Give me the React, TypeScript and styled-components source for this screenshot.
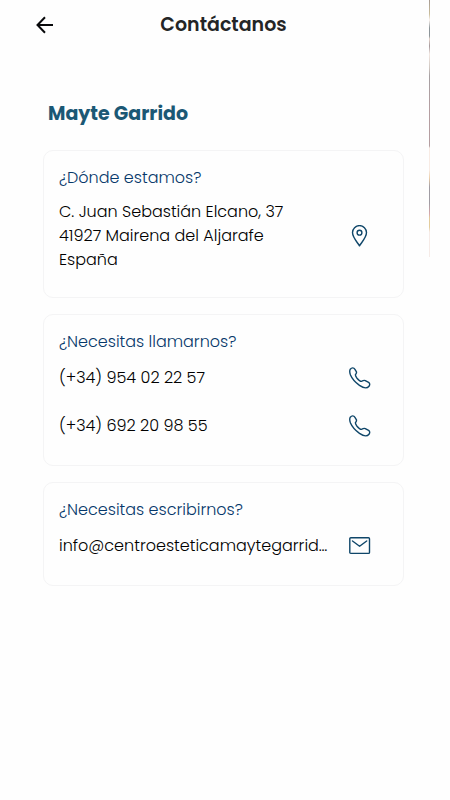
import React from "react";
import styled, { createGlobalStyle } from "styled-components";

const GlobalStyle = createGlobalStyle`
  * { box-sizing: border-box; }
  body { margin: 0; background: #fefefe; font-family: Poppins, Inter, "Open Sans", sans-serif; }
`;

const Screen = styled.div`
  position: relative;
  min-height: 100vh;
  margin: 0 20px 0 17px;
  color: #000000;

  &::after {
    content: "";
    position: absolute;
    top: 0;
    right: 0;
    width: 1px;
    height: 257px;
    background: linear-gradient(
      #a79a92 0, #c9bd9b 14px, #fbf3ee 20px, #8d9599 28px, #8d9599 36px, #e6d5cc 39px,
      #a5989b 46px, #f3e8e2 54px, #cfc6c0 68px, #a6a0a2 76px, #b59ea1 110px, #b59ea1 146px,
      #f8ebe4 148px, #f8ebe4 170px, #edcfaa 178px, #a09ca3 187px, #a09ca3 203px,
      #d8a8ab 214px, #e3cc9c 218px, #e3cc9c 227px, #f6ebe7 232px, #f6ebe7 257px
    );
  }
`;

const Header = styled.header`
  display: grid;
  grid-template-columns: 56px 1fr 56px;
  align-items: center;
  height: 50px;
`;

const BackButton = styled.button`
  display: flex;
  align-items: center;
  justify-content: center;
  height: 48px;
  padding: 0;
  border: 0;
  background: none;
  color: #08090b;
  cursor: pointer;
`;

const Title = styled.h1`
  margin: 0;
  font-size: 19px;
  line-height: 24px;
  font-weight: 600;
  text-align: center;
  color: #242526;
`;

const Main = styled.main`
  display: flex;
  flex-direction: column;
  gap: 16px;
  padding: 50px 26px 0;
`;

const BusinessName = styled.h2`
  margin: 0 0 6px;
  padding-left: 5px;
  font-size: 19px;
  line-height: 28px;
  font-weight: 700;
  color: #1b5875;
`;

const Card = styled.section`
  padding: 15px;
  border: 1px solid #f4f4f5;
  border-radius: 10px;
`;

const CardHeading = styled.h3`
  margin: 0;
  font-size: 16px;
  line-height: 24px;
  font-weight: 300;
  color: #06386a;
`;

const ContactRow = styled.a`
  display: flex;
  align-items: center;
  gap: 16px;
  min-height: 48px;
  padding: 10px 17px 10px 0;
  color: inherit;
  text-decoration: none;
`;

const ContactText = styled.span`
  flex: 1;
  min-width: 0;
  overflow: hidden;
  text-overflow: ellipsis;
  white-space: pre;
  font-size: 16px;
  line-height: 24px;
  font-weight: 300;
`;

const Icon = styled.svg`
  flex: none;
  display: block;
  width: 22px;
  height: 22px;
  fill: none;
  stroke: #0f4669;
  stroke-width: 1.4;
  stroke-linecap: round;
  stroke-linejoin: round;
`;

const BackIcon = () => (
  <svg width="18" height="18" viewBox="0 0 18 18" fill="none" stroke="currentColor" strokeWidth="2" aria-hidden="true">
    <path d="M17 9H2M9 1.3 1.5 9 9 16.7" />
  </svg>
);

const PinIcon = () => (
  <Icon viewBox="0 0 22 22" aria-hidden="true">
    <path d="M10.5 20.8C8.3 17.2 3.5 12.5 3.5 7.6a7 7 0 0 1 14 0c0 4.900-4.800 9.600-7 13.200Z" />
    <circle cx="10.5" cy="7.7" r="2.4" />
  </Icon>
);

const PhoneIcon = () => (
  <Icon viewBox="0 0 22 22" aria-hidden="true">
    <path d="M1.3 2.2C2.6.6 4.8.4 5.8 2.2L7.3 4.6C7.9 5.8 7.300 6.5 6.7 7.2 5.9 8.2 6.2 9 8 11.2 10 13.5 11.7 14.7 12.8 14.2 14 13.5 15 12.9 16.3 13.6L19.6 15.3C21 16.2 21 17.9 20 19.2 18.3 21.4 14.6 21.2 10.5 18.4 6.6 15.6 3 11.6 1.5 8 .7 5.8.4 3.6 1.3 2.2Z" />
  </Icon>
);

const MailIcon = () => (
  <Icon viewBox="0 0 22 22" aria-hidden="true">
    <rect x="0.8" y="2.7" width="19.7" height="15.7" rx="1" />
    <path d="m3.500 6 7.100 5.300L17.700 6" />
  </Icon>
);

const address = "C. Juan Sebastián Elcano, 37\n41927 Mairena del Aljarafe\nEspaña";
const phones = ["(+34) 954 02 22 57", "(+34) 692 20 98 55"];
const email = "info@centroesteticamaytegarrido.com";

export default function App() {
  return (
    <>
      <GlobalStyle />
      <Screen>
        <Header>
          <BackButton type="button" aria-label="Volver">
            <BackIcon />
          </BackButton>
          <Title>Contáctanos</Title>
        </Header>
        <Main>
          <BusinessName>Mayte Garrido</BusinessName>
          <Card>
            <CardHeading>¿Dónde estamos?</CardHeading>
            <ContactRow href="#mapa">
              <ContactText>{address}</ContactText>
              <PinIcon />
            </ContactRow>
          </Card>
          <Card>
            <CardHeading>¿Necesitas llamarnos?</CardHeading>
            {phones.map((phone) => (
              <ContactRow key={phone} href={`tel:${phone.replace(/[^+\d]/g, "")}`}>
                <ContactText>{phone}</ContactText>
                <PhoneIcon />
              </ContactRow>
            ))}
          </Card>
          <Card>
            <CardHeading>¿Necesitas escribirnos?</CardHeading>
            <ContactRow href={`mailto:${email}`}>
              <ContactText>{email}</ContactText>
              <MailIcon />
            </ContactRow>
          </Card>
        </Main>
      </Screen>
    </>
  );
}
